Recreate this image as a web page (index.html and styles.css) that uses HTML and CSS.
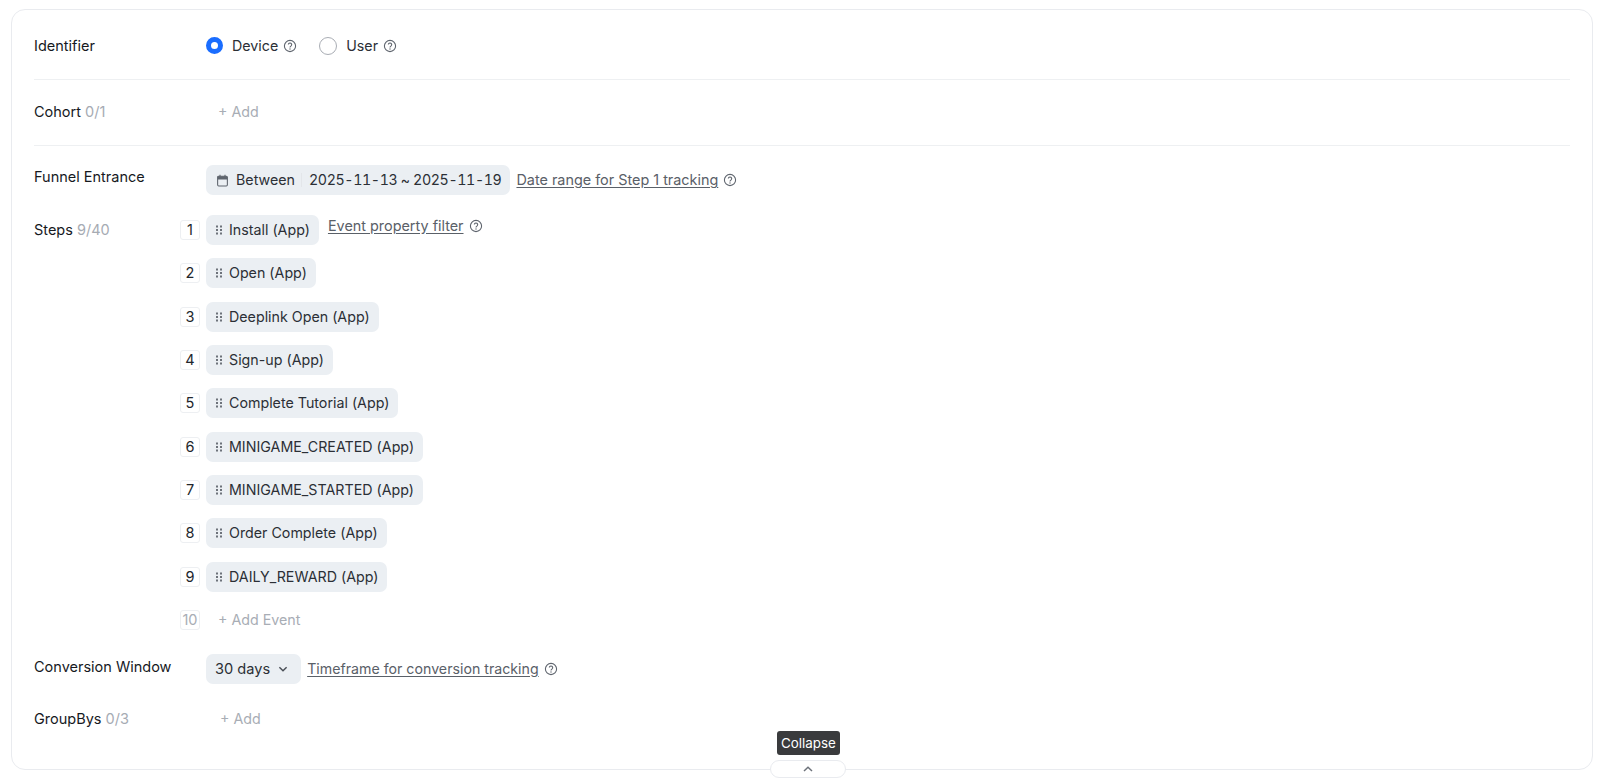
FILE: index.html
```html
<!DOCTYPE html>
<html lang="en">
<head>
    <meta charset="UTF-8">
    <title>Funnel Settings</title>
    <link rel="stylesheet" href="styles.css">
</head>
<body>
    <svg class="defs" width="0" height="0">
        <symbol id="help" viewBox="0 0 14 14">
            <circle cx="7" cy="7" r="5.6" fill="none" stroke="currentColor" stroke-width="1.1"/>
            <path d="M5.3 5.6a1.7 1.7 0 1 1 2.6 1.5c-.6.4-.9.7-.9 1.3" fill="none" stroke="currentColor" stroke-width="1.1"/>
            <circle cx="7" cy="10" r=".7" fill="currentColor"/>
        </symbol>
        <symbol id="grip" viewBox="0 0 8 10">
            <g fill="currentColor">
                <rect x="1" y="0.5" width="2" height="2"/><rect x="5" y="0.5" width="2" height="2"/>
                <rect x="1" y="4" width="2" height="2"/><rect x="5" y="4" width="2" height="2"/>
                <rect x="1" y="7.5" width="2" height="2"/><rect x="5" y="7.5" width="2" height="2"/>
            </g>
        </symbol>
    </svg>

    <main class="card">
        <!-- Identifier -->
        <section class="row row-identifier">
            <div class="label">Identifier</div>
            <div class="radios">
                <label class="radio">
                    <span class="radio-dot checked"></span>Device
                    <svg class="help"><use href="#help"/></svg>
                </label>
                <label class="radio">
                    <span class="radio-dot"></span>User
                    <svg class="help"><use href="#help"/></svg>
                </label>
            </div>
        </section>

        <!-- Cohort -->
        <section class="row row-cohort">
            <div class="label">Cohort <span class="count">0/1</span></div>
            <div class="add add-cohort">+ Add</div>
        </section>

        <!-- Funnel -->
        <section class="funnel">
            <div class="row row-entrance">
                <div class="label">Funnel Entrance</div>
                <div class="chip chip-date">
                    <svg class="calendar" viewBox="0 0 12 12">
                        <path d="M1.5 3a1 1 0 0 1 1-1h7a1 1 0 0 1 1 1v7a1 1 0 0 1-1 1h-7a1 1 0 0 1-1-1z" fill="none" stroke="currentColor" stroke-width="1"/>
                        <path d="M1.5 3a1 1 0 0 1 1-1h7a1 1 0 0 1 1 1v2h-9zM3.2.8h1v2h-1zM7.8.8h1v2h-1z" fill="currentColor"/>
                    </svg>
                    <span class="date-kind">Between</span>
                    <span class="date-range">2025-11-13 ~ 2025-11-19</span>
                </div>
                <a class="hint" href="#">Date range for Step 1 tracking</a>
                <svg class="help"><use href="#help"/></svg>
            </div>

            <div class="row row-steps">
                <div class="label">Steps <span class="count">9/40</span></div>
                <ol class="steps">
                    <li class="step">
                        <span class="num">1</span>
                        <span class="chip"><svg class="grip"><use href="#grip"/></svg>Install (App)</span>
                        <a class="hint hint-event" href="#">Event property filter</a>
                        <svg class="help help-event"><use href="#help"/></svg>
                    </li>
                    <li class="step"><span class="num">2</span><span class="chip"><svg class="grip"><use href="#grip"/></svg>Open (App)</span></li>
                    <li class="step"><span class="num">3</span><span class="chip"><svg class="grip"><use href="#grip"/></svg>Deeplink Open (App)</span></li>
                    <li class="step"><span class="num">4</span><span class="chip"><svg class="grip"><use href="#grip"/></svg>Sign-up (App)</span></li>
                    <li class="step"><span class="num">5</span><span class="chip"><svg class="grip"><use href="#grip"/></svg>Complete Tutorial (App)</span></li>
                    <li class="step"><span class="num">6</span><span class="chip"><svg class="grip"><use href="#grip"/></svg>MINIGAME_CREATED (App)</span></li>
                    <li class="step"><span class="num">7</span><span class="chip"><svg class="grip"><use href="#grip"/></svg>MINIGAME_STARTED (App)</span></li>
                    <li class="step"><span class="num">8</span><span class="chip"><svg class="grip"><use href="#grip"/></svg>Order Complete (App)</span></li>
                    <li class="step"><span class="num">9</span><span class="chip"><svg class="grip"><use href="#grip"/></svg>DAILY_REWARD (App)</span></li>
                    <li class="step step-add"><span class="num num-muted">10</span><span class="add add-event">+ Add Event</span></li>
                </ol>
            </div>

            <div class="row row-window">
                <div class="label">Conversion Window</div>
                <div class="chip chip-window">30 days
                    <svg class="chevron" viewBox="0 0 10 10"><path d="M2 3.5 5 6.5 8 3.5" fill="none" stroke="currentColor" stroke-width="1.2"/></svg>
                </div>
                <a class="hint hint-window" href="#">Timeframe for conversion tracking</a>
                <svg class="help"><use href="#help"/></svg>
            </div>

            <div class="row row-groupby">
                <div class="label">GroupBys <span class="count">0/3</span></div>
                <div class="add add-group">+ Add</div>
            </div>
        </section>

        <div class="collapse">
            <span class="tooltip">Collapse</span>
            <button class="collapse-btn">
                <svg viewBox="0 0 12 8"><path d="M2 6 6 2.2 10 6" fill="none" stroke="currentColor" stroke-width="1.5"/></svg>
            </button>
        </div>
    </main>
</body>
</html>
```

FILE: styles.css
```css
/* General Styles */
body {
    margin: 0;
    padding: 9px 7px 10px 11px;
    background-color: #fff;
    color: #1c2026;
    font-family: Inter, "Noto Sans", sans-serif;
    font-size: 14.25px;
    line-height: 20px;
}

.defs {
    position: absolute;
}

/* Card */
.card {
    position: relative;
    height: 761px;
    box-sizing: border-box;
    padding: 0 22px;
    border: 1px solid #e9ebef;
    border-radius: 14px;
}

.row {
    display: flex;
    align-items: center;
}

.label {
    width: 172px;
    flex-shrink: 0;
    color: #16191e;
    font-size: 14.5px;
}

.count {
    color: #a6abb3;
}

.add {
    color: #a8adb5;
}

/* Identifier */
.row-identifier {
    height: 70px;
    box-sizing: border-box;
    padding-top: 2px;
    border-bottom: 1px solid #eef0f2;
}

.radios {
    display: flex;
    gap: 22px;
}

.radio {
    display: flex;
    align-items: center;
    color: #2b2f36;
}

.radio-dot {
    width: 16px;
    height: 16px;
    margin-right: 9px;
    border: 1px solid #a9adb4;
    border-radius: 50%;
}

.radio-dot.checked {
    width: 7px;
    height: 7px;
    border: 5.5px solid #1a6dff;
}

.help {
    width: 14px;
    height: 14px;
    margin-left: 5px;
    color: #5f656e;
    flex-shrink: 0;
}

/* Cohort */
.row-cohort {
    height: 66px;
    box-sizing: border-box;
    padding-bottom: 2px;
    border-bottom: 1px solid #eef0f2;
}

.add-cohort {
    margin-left: 12px;
}

/* Funnel */
.funnel {
    padding-top: 19px;
}

.chip {
    display: inline-flex;
    align-items: center;
    height: 30px;
    box-sizing: border-box;
    padding: 0 9px;
    border-radius: 7px;
    background-color: #ebeff3;
    color: #2b2f36;
    white-space: nowrap;
}

.row-entrance .label {
    margin-top: -6px;
}

.calendar {
    width: 13px;
    height: 13px;
    margin: 0 7px 0 1px;
    color: #5f656e;
}

.date-kind {
    padding-right: 6px;
    border-right: 1px solid #e3e6ea;
    line-height: 14px;
}

.date-range {
    margin-left: 7px;
    font-variant-numeric: tabular-nums;
    letter-spacing: -0.4px;
}

.hint {
    margin-left: 6px;
    color: #5a6068;
    font-size: 14.4px;
    text-decoration: underline;
    text-underline-offset: 2px;
    white-space: nowrap;
}

.hint-window {
    font-size: 14.2px;
}

/* Steps */
.row-steps {
    align-items: flex-start;
    margin-top: 20px;
}

.row-steps .label {
    width: 146px;
    padding-top: 5px;
}

.steps {
    margin: 0;
    padding: 0;
    list-style: none;
}

.step {
    display: flex;
    align-items: center;
    height: 30px;
    margin-bottom: 13.33px;
}

.step:last-child {
    margin-bottom: 0;
}

.num {
    display: flex;
    justify-content: center;
    width: 18px;
    height: 18px;
    margin-right: 6px;
    border: 1px solid #edeff2;
    border-radius: 3px;
    font-size: 14.5px;
    line-height: 18px;
    color: #22262c;
}

.num-muted {
    color: #a8adb5;
}

.grip {
    width: 8px;
    height: 10px;
    margin-right: 6px;
    color: #6d727a;
}

.hint-event {
    margin: -9px 0 0 9px;
}

.help-event {
    margin-top: -9px;
}

.add-event {
    margin-left: 12px;
}

/* Conversion Window */
.row-window {
    margin-top: 19px;
}

.row-window .label {
    margin-top: -3px;
}

.chip-window {
    padding-right: 12px;
    font-size: 14.6px;
}

.chevron {
    width: 12px;
    height: 12px;
    margin-left: 7px;
    color: #4a4f57;
}

/* GroupBys */
.row-groupby {
    margin-top: 25px;
}

.add-group {
    margin-left: 14px;
}

/* Collapse */
.collapse {
    position: absolute;
    left: 758px;
    bottom: -9px;
    width: 76px;
}

.tooltip {
    position: absolute;
    left: 7px;
    bottom: 23px;
    padding: 0 4px;
    border-radius: 3px;
    background-color: #3a3b3d;
    color: #fff;
    font-size: 13.4px;
    line-height: 24px;
}

.collapse-btn {
    display: flex;
    align-items: center;
    justify-content: center;
    width: 76px;
    height: 18px;
    padding: 0;
    border: 1px solid #e9ebef;
    border-radius: 9px;
    background-color: #fff;
    color: #6d727a;
}

.collapse-btn svg {
    width: 12px;
    height: 8px;
}
```
